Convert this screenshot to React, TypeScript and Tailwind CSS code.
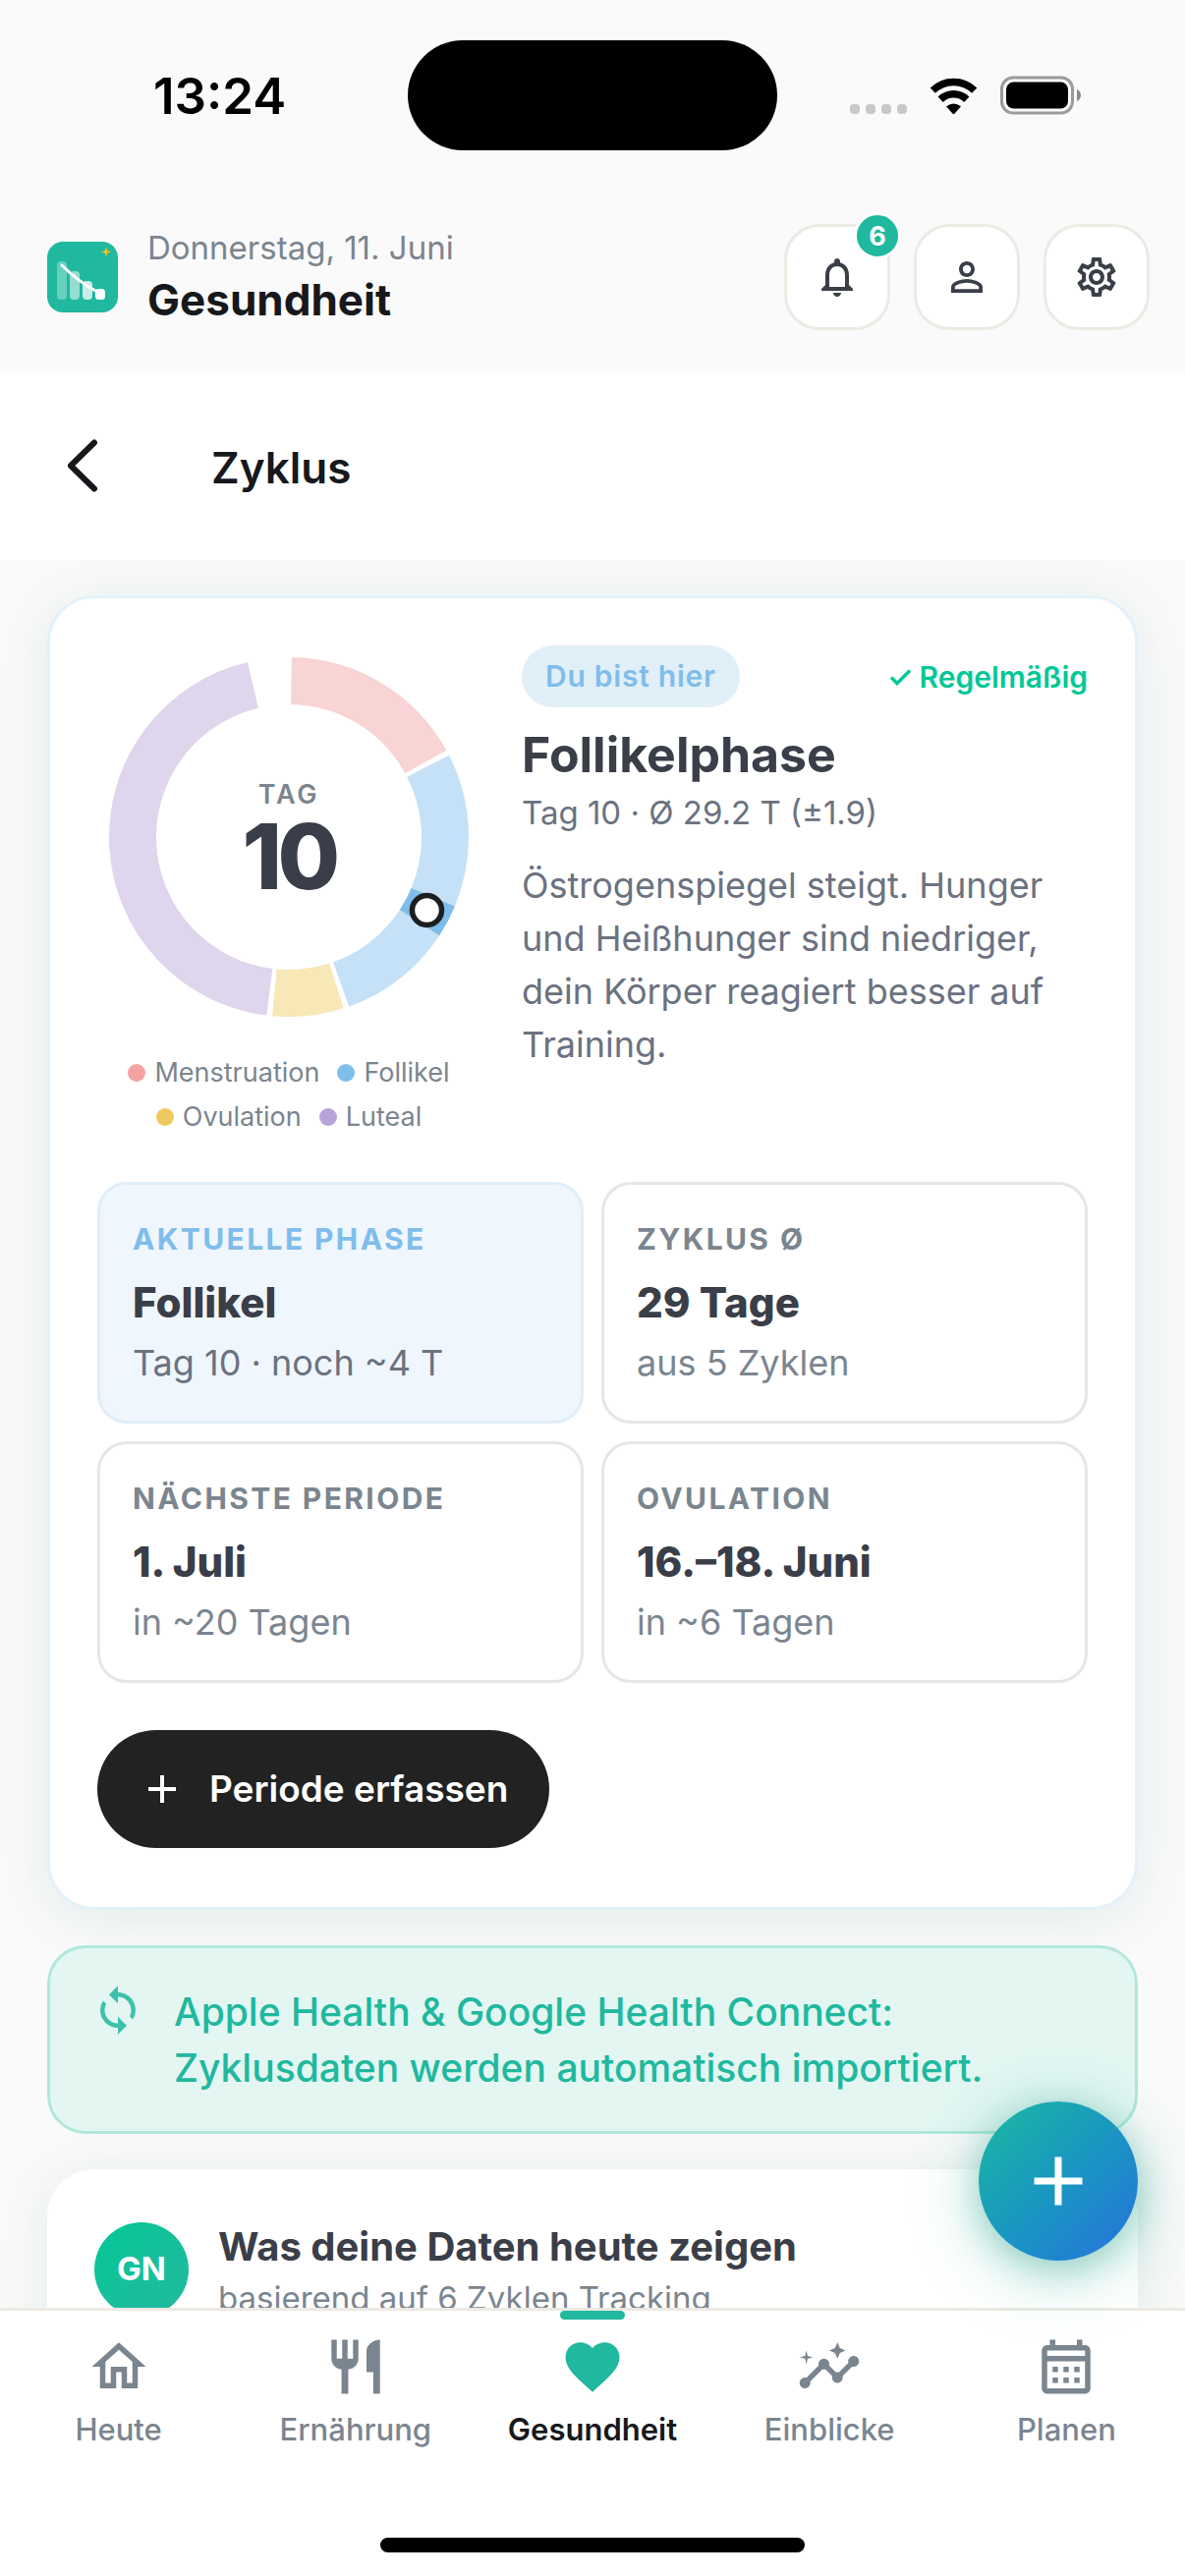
import type { ReactNode } from 'react';
import type { IconType } from 'react-icons';
import {
  MdAdd,
  MdFavorite,
  MdInsights,
  MdOutlineCalendarMonth,
  MdOutlineHome,
  MdOutlineNotifications,
  MdOutlineSettings,
  MdPersonOutline,
  MdRestaurant,
  MdSync,
} from 'react-icons/md';

const CYCLE_DAYS = 29;
const CURRENT_DAY = 10;

const phases = [
  { name: 'Menstruation', from: 0, to: 5, color: '#f9d4d4', dot: 'bg-[#f4a2a2]' },
  { name: 'Follikel', from: 5, to: 13, color: '#c5e1f7', dot: 'bg-[#7fbdeb]' },
  { name: 'Ovulation', from: 13, to: 15, color: '#f8e7b7', dot: 'bg-[#efc95e]' },
  { name: 'Luteal', from: 15, to: 28, color: '#dfd5ec', dot: 'bg-[#b7a3da]' },
];

const stats = [
  { label: 'Aktuelle Phase', value: 'Follikel', hint: 'Tag 10 · noch ~4 T', active: true },
  { label: 'Zyklus Ø', value: '29 Tage', hint: 'aus 5 Zyklen' },
  { label: 'Nächste Periode', value: '1. Juli', hint: 'in ~20 Tagen' },
  { label: 'Ovulation', value: '16.–18. Juni', hint: 'in ~6 Tagen' },
];

const tabs: { label: string; icon: IconType; active?: boolean }[] = [
  { label: 'Heute', icon: MdOutlineHome },
  { label: 'Ernährung', icon: MdRestaurant },
  { label: 'Gesundheit', icon: MdFavorite, active: true },
  { label: 'Einblicke', icon: MdInsights },
  { label: 'Planen', icon: MdOutlineCalendarMonth },
];

// Point on the ring, angle in degrees clockwise from the top
function ringPoint(angle: number, radius = 159) {
  const rad = ((angle - 90) * Math.PI) / 180;
  return { x: 195 + radius * Math.cos(rad), y: 195 + radius * Math.sin(rad) };
}

function arcPath(fromDay: number, toDay: number) {
  const gap = 0.9;
  const start = (fromDay / CYCLE_DAYS) * 360 + gap;
  const end = (toDay / CYCLE_DAYS) * 360 - gap;
  const a = ringPoint(start);
  const b = ringPoint(end);
  return `M ${a.x} ${a.y} A 159 159 0 ${end - start > 180 ? 1 : 0} 1 ${b.x} ${b.y}`;
}

function StatusBar() {
  return (
    <div className="grid h-[194px] shrink-0 grid-cols-[1fr_376px_1fr] items-center">
      <time className="pl-8 text-center text-[51px] leading-none font-semibold text-black">13:24</time>
      <div className="h-28 rounded-full bg-black" />
      <div className="flex items-center pl-[74px]">
        <svg className="h-10 w-[58px]" viewBox="0 0 58 40" fill="#c8c8c9" aria-hidden="true">
          {[0, 16, 32, 48].map((x) => (
            <rect key={x} x={x} y="29" width="10" height="10" rx="4" />
          ))}
        </svg>
        <svg className="ml-[22px] h-10 w-[51px]" viewBox="0 0 51 40" fill="none" aria-label="WLAN">
          <path d="M4.300 15.200a30 30 0 0 1 42.400 0" stroke="#000" strokeWidth="7.500" />
          <path d="M12.200 24.200a19 19 0 0 1 26.600 0" stroke="#000" strokeWidth="7.500" />
          <path d="M18 31.300Q25.500 25.500 33 31.300l-6.600 7.400q-.9.900-1.800 0z" fill="#000" />
        </svg>
        <svg className="ml-[22px] h-10 w-[83px]" viewBox="0 0 83 40" aria-label="Batterie">
          <rect x="1.500" y="2" width="72" height="36" rx="11.500" fill="none" stroke="#9b9b9b" strokeWidth="3" />
          <rect x="6" y="6.500" width="63" height="27" rx="7.500" fill="#000" />
          <path d="M78 14v12c2.400-1 4-3.300 4-6s-1.600-5-4-6z" fill="#8a8a8a" />
        </svg>
      </div>
    </div>
  );
}

function Logo() {
  return (
    <svg className="size-[72px]" viewBox="0 0 72 72" aria-hidden="true">
      <rect width="72" height="72" rx="16" fill="#20b89e" />
      <g fill="#fff">
        <rect x="10" y="20" width="10" height="39" rx="4" opacity="0.32" />
        <rect x="23" y="30" width="10" height="29" rx="4" opacity="0.52" />
        <rect x="36" y="40" width="10" height="19" rx="4" opacity="0.75" />
        <rect x="49" y="48" width="10" height="11" rx="3.500" />
      </g>
      <path d="M15 24Q32 41 51 51" fill="none" stroke="#fff" strokeWidth="3" strokeLinecap="round" />
      <path d="M60 5.500l1.200 3.600 4 1.100-4 1.200-1.200 4-1.200-4-4-1.200 4-1.100z" fill="#fbbf24" />
    </svg>
  );
}

function HeaderButton({ label, icon: Icon, badge }: { label: string; icon: IconType; badge?: number }) {
  return (
    <button
      type="button"
      aria-label={label}
      className="relative flex size-[108px] items-center justify-center rounded-[36px] border-3 border-[#edeae3] bg-white text-[#3a3e48]"
    >
      <Icon className="size-12" />
      {badge && (
        <span className="absolute -top-[15px] -right-3.5 flex size-12 items-center justify-center rounded-full border-3 border-white bg-[#20b89e] text-[27px] leading-none font-bold text-white">
          {badge}
        </span>
      )}
    </button>
  );
}

function AppHeader() {
  return (
    <header className="flex shrink-0 items-center justify-between pt-[34px] pr-9 pb-[42px] pl-12">
      <div className="flex items-center gap-[30px]">
        <Logo />
        <div>
          <p className="text-[33px] leading-[46px] text-[#7b858f]">Donnerstag, 11. Juni</p>
          <h1 className="text-[44px] leading-[60px] font-bold text-[#17181c]">Gesundheit</h1>
        </div>
      </div>
      <div className="flex gap-6">
        <HeaderButton label="Benachrichtigungen" icon={MdOutlineNotifications} badge={6} />
        <HeaderButton label="Profil" icon={MdPersonOutline} />
        <HeaderButton label="Einstellungen" icon={MdOutlineSettings} />
      </div>
    </header>
  );
}

function CycleRing() {
  const marker = ringPoint(((CURRENT_DAY - 0.5) / CYCLE_DAYS) * 360);
  return (
    <div className="w-[390px] shrink-0">
      <div className="relative">
        <svg className="size-[390px]" viewBox="0 0 390 390" fill="none" strokeWidth="48" aria-hidden="true">
          {phases.map((phase) => (
            <path key={phase.name} d={arcPath(phase.from, phase.to)} stroke={phase.color} />
          ))}
          <path d={arcPath(CURRENT_DAY - 1, CURRENT_DAY)} stroke="#7fbdeb" />
          <circle cx={marker.x} cy={marker.y} r="15" fill="#fff" stroke="#1c1e1f" strokeWidth="5.500" />
        </svg>
        <div className="absolute inset-0 flex flex-col items-center justify-center pt-1">
          <span className="text-[27px] leading-9 font-semibold tracking-widest text-[#7b858f]">TAG</span>
          <span className="text-[92px] leading-[90px] font-extrabold tracking-tighter text-[#3a3e48]">
            {CURRENT_DAY}
          </span>
        </div>
      </div>
      <ul className="mt-[27px] flex flex-wrap justify-center gap-x-[18px] gap-y-[9px] text-[27px] leading-9 text-[#7b858f]">
        {phases.map((phase) => (
          <li key={phase.name} className="flex items-center gap-[9px]">
            <span className={`size-[18px] rounded-full ${phase.dot}`} />
            {phase.name}
          </li>
        ))}
      </ul>
    </div>
  );
}

function StatTile({ label, value, hint, active }: { label: string; value: string; hint: string; active?: boolean }) {
  return (
    <div
      className={`rounded-[30px] border-3 px-[33px] pt-[34px] pb-8 ${
        active ? 'border-[#e0eef9] bg-[#eff6fd]' : 'border-[#e5e6ea] bg-white'
      }`}
    >
      <dt
        className={`text-[30px] leading-[42px] font-bold tracking-[0.08em] uppercase ${
          active ? 'text-[#7fbdeb]' : 'text-[#7b858f]'
        }`}
      >
        {label}
      </dt>
      <dd className="mt-3.5 text-[42px] leading-[60px] font-extrabold text-[#3a3e48]">{value}</dd>
      <dd className={`mt-1 text-4xl leading-[54px] ${active ? 'text-[#6b7280]' : 'text-[#7b858f]'}`}>{hint}</dd>
    </div>
  );
}

function CycleCard() {
  return (
    <section className="rounded-[48px] border-3 border-[#e3f1fb] bg-white px-12 pt-12 pb-[60px] shadow-[0_8px_60px_rgba(20,110,95,0.1)]">
      <div className="flex gap-[42px]">
        <CycleRing />
        <div className="min-w-0 flex-1">
          <div className="flex items-center justify-between">
            <span className="rounded-full bg-[#e1eff9] px-6 text-[30px] leading-[63px] font-semibold tracking-wide text-[#7fbdeb]">
              Du bist hier
            </span>
            <span className="flex items-center gap-2 text-[30px] leading-[42px] font-semibold text-[#00c896]">
              <svg className="size-6" viewBox="0 0 24 24" fill="none" aria-hidden="true">
                <path d="M3 12.500l6 6L22 5.500" stroke="currentColor" strokeWidth="3.500" />
              </svg>
              Regelmäßig
            </span>
          </div>
          <h3 className="mt-[15px] text-[50px] leading-[66px] font-bold text-[#3a3e48]">Follikelphase</h3>
          <p className="mt-1 text-[33px] leading-[45px] text-[#6b7280]">Tag 10 · Ø 29.2 T (±1.9)</p>
          <p className="mt-6 text-4xl leading-[54px] text-[#6b7280]">
            Östrogenspiegel steigt. Hunger und Heißhunger sind niedriger, dein Körper reagiert besser auf Training.
          </p>
        </div>
      </div>
      <dl className="mt-12 grid grid-cols-2 gap-[18px]">
        {stats.map((stat) => (
          <StatTile key={stat.label} {...stat} />
        ))}
      </dl>
      <button
        type="button"
        className="mt-12 flex h-[120px] items-center gap-6 rounded-full bg-[#222] px-[42px] text-[37px] font-semibold text-white"
      >
        <MdAdd className="size-12" />
        Periode erfassen
      </button>
    </section>
  );
}

function SyncNotice() {
  return (
    <section className="flex items-start gap-[30px] rounded-[39px] border-3 border-[#b1e7dc] bg-[#e3f6f2] px-[42px] py-9 text-[#20b89e]">
      <MdSync className="size-[54px] shrink-0 opacity-85" />
      <p className="text-[39px] leading-[57px] font-medium">
        Apple Health &amp; Google Health Connect:
        <br />
        Zyklusdaten werden automatisch importiert.
      </p>
    </section>
  );
}

function InsightCard() {
  return (
    <section className="flex items-start gap-[30px] rounded-[48px] bg-white px-12 pt-[54px] pb-24 shadow-[0_8px_60px_rgba(20,110,95,0.1)]">
      <span className="flex size-24 shrink-0 items-center justify-center rounded-full bg-linear-to-br from-[#00c896] to-[#20b89e] text-[33px] font-bold text-white">
        GN
      </span>
      <div>
        <h3 className="text-[40px] leading-[50px] font-bold text-[#3a3e48]">Was deine Daten heute zeigen</h3>
        <p className="text-[33px] leading-[54px] text-[#7b858f]">basierend auf 6 Zyklen Tracking</p>
      </div>
    </section>
  );
}

function TabBar({ children }: { children?: ReactNode }) {
  return (
    <nav className="relative shrink-0 border-t-3 border-[#edeae3] bg-white">
      {children}
      <div className="grid grid-cols-5">
        {tabs.map(({ label, icon: Icon, active }) => (
          <a
            key={label}
            href={`#${label.toLowerCase()}`}
            aria-current={active ? 'page' : undefined}
            className={`flex flex-col items-center text-[31px] leading-[42px] ${
              active ? 'font-semibold text-[#17181c]' : 'font-medium text-[#7b858f]'
            }`}
          >
            <span className={`h-[9px] w-[66px] rounded-full ${active ? 'bg-[#20b89e]' : ''}`} />
            <Icon className={`mt-[15px] mb-2.5 size-[66px] ${active ? 'text-[#20b89e]' : ''}`} />
            {label}
          </a>
        ))}
      </div>
      <div className="mx-auto mt-[89px] mb-6 h-[15px] w-[432px] rounded-full bg-black" />
    </nav>
  );
}

export default function App() {
  return (
    <div className="flex h-screen flex-col overflow-hidden bg-[#fafafa] font-['Inter',sans-serif] antialiased">
      <StatusBar />
      <AppHeader />
      <div className="flex h-48 shrink-0 items-center gap-[88px] bg-white pl-[57px]">
        <button type="button" aria-label="Zurück" className="flex h-[72px] w-[70px] items-center text-[#17181c]">
          <svg className="h-[54px] w-[54px]" viewBox="0 0 54 54" fill="none" aria-hidden="true">
            <path
              d="M39 3.500L15 27l24 23.500"
              stroke="currentColor"
              strokeWidth="6"
              strokeLinecap="round"
              strokeLinejoin="round"
            />
          </svg>
        </button>
        <h2 className="pt-1 text-[44px] leading-[60px] font-semibold text-[#17181c]">Zyklus</h2>
      </div>
      <main className="flex min-h-0 flex-1 flex-col gap-9 overflow-hidden px-12 pt-9 *:shrink-0">
        <CycleCard />
        <SyncNotice />
        <InsightCard />
      </main>
      <TabBar>
        <button
          type="button"
          aria-label="Eintrag hinzufügen"
          className="absolute right-12 bottom-full mb-[51px] flex size-[162px] items-center justify-center rounded-full bg-linear-to-br from-[#20b89e] to-[#2870dc] text-white shadow-[0_12px_72px_rgba(32,184,158,0.3),0_8px_36px_rgba(20,130,110,0.35)]"
        >
          <MdAdd className="size-[84px]" />
        </button>
      </TabBar>
    </div>
  );
}
